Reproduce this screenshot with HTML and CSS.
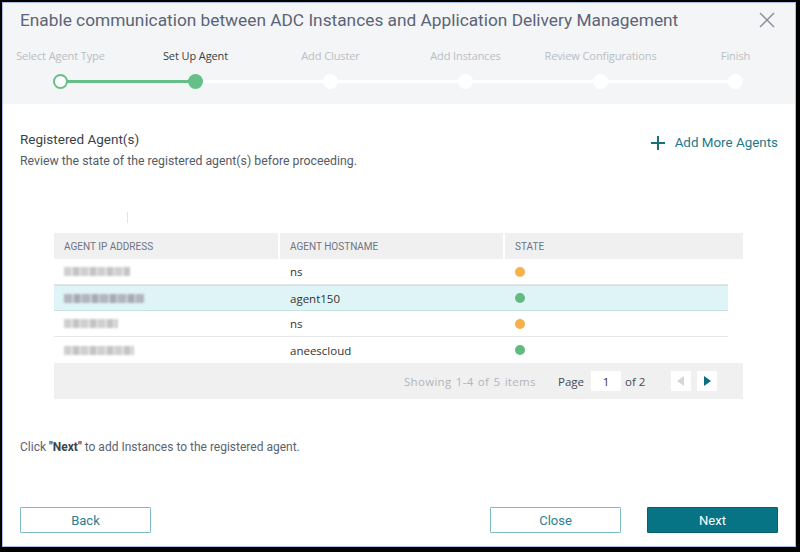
FILE: index.html
```html
<!DOCTYPE html>
<html>
<head>
<meta charset="utf-8">
<link rel="stylesheet" href="styles.css">
</head>
<body>
<div class="frame">
  <header class="head">
    <div class="title-row">
      <h1 class="title">Enable communication between ADC Instances and Application Delivery Management</h1>
      <svg class="close" width="16" height="16" viewBox="0 0 16 16"><path d="M1 1 L15 15 M15 1 L1 15" stroke="#8a9099" stroke-width="1.5" fill="none"/></svg>
    </div>
    <div class="stepper">
      <div class="step done first"><span class="label">Select Agent Type</span><span class="dot"></span></div>
      <div class="step active"><span class="label">Set Up Agent</span><span class="dot"></span></div>
      <div class="step"><span class="label">Add Cluster</span><span class="dot"></span></div>
      <div class="step"><span class="label">Add Instances</span><span class="dot"></span></div>
      <div class="step"><span class="label">Review Configurations</span><span class="dot"></span></div>
      <div class="step"><span class="label">Finish</span><span class="dot"></span></div>
    </div>
  </header>
  <main class="body">
    <div class="section-head">
      <div class="section-title">Registered Agent(s)</div>
      <a class="add-link"><svg width="14" height="14" viewBox="0 0 14 14"><path d="M7 0 V14 M0 7 H14" stroke="#1a6f7d" stroke-width="2"/></svg>Add More Agents</a>
    </div>
    <p class="desc">Review the state of the registered agent(s) before proceeding.</p>
    <div class="tick-wrap"><span class="tick"></span></div>
    <div class="table">
      <div class="thead">
        <div class="th c1">AGENT IP ADDRESS</div>
        <div class="th c2">AGENT HOSTNAME</div>
        <div class="th c3">STATE</div>
      </div>
      <div class="rows">
        <div class="tr">
          <div class="td c1"><span class="blur w66"></span></div>
          <div class="td c2">ns</div>
          <div class="td c3"><span class="state warn"></span></div>
        </div>
        <div class="tr sel">
          <div class="td c1"><span class="blur w80 dark"></span></div>
          <div class="td c2">agent150</div>
          <div class="td c3"><span class="state ok"></span></div>
        </div>
        <div class="tr">
          <div class="td c1"><span class="blur w54"></span></div>
          <div class="td c2">ns</div>
          <div class="td c3"><span class="state warn"></span></div>
        </div>
        <div class="tr last">
          <div class="td c1"><span class="blur w70"></span></div>
          <div class="td c2">aneescloud</div>
          <div class="td c3"><span class="state ok"></span></div>
        </div>
      </div>
      <div class="tfoot">
        <span class="showing">Showing 1-4 of 5 items</span>
        <span class="page">Page</span>
        <span class="page-input">1</span>
        <span class="of">of 2</span>
        <span class="pbtn"><svg width="8" height="10" viewBox="0 0 8 10"><path d="M7 0 L0 5 L7 10 Z" fill="#d3d6da"/></svg></span>
        <span class="pbtn"><svg width="8" height="10" viewBox="0 0 8 10"><path d="M1 0 L8 5 L1 10 Z" fill="#0b6e7e"/></svg></span>
      </div>
    </div>
    <p class="hint">Click <b>"Next"</b> to add Instances to the registered agent.</p>
  </main>
  <footer class="actions">
    <button class="btn outline">Back</button>
    <span class="spacer"></span>
    <button class="btn outline">Close</button>
    <button class="btn primary">Next</button>
  </footer>
</div>
</body>
</html>
```
FILE: styles.css
```css
* { box-sizing: border-box; }
html, body { margin: 0; padding: 0; }
body {
  background: #000;
  width: 800px;
  height: 552px;
  padding: 2px 4px 5px 2px;
  font-family: "Open Sans", "Liberation Sans", sans-serif;
  color: #333;
}
.frame {
  width: 794px;
  height: 545px;
  border: 1px solid #a9c0e6;
  background: #fff;
  display: flex;
  flex-direction: column;
  overflow: hidden;
}
.head {
  background: #f4f5f6;
  height: 101px;
  padding: 6px 0 0 0;
}
.title-row {
  display: flex;
  align-items: center;
  padding: 0 20px 0 17px;
  height: 22px;
}
.title {
  margin: 0;
  flex: 1;
  font-family: "Roboto", "Liberation Sans", sans-serif;
  font-weight: 400;
  font-size: 17.3px;
  color: #5b6478;
  white-space: nowrap;
}
.stepper {
  display: flex;
  margin-left: -10px;
  margin-top: 18px;
}
.step {
  width: 135px;
  flex: none;
  display: flex;
  flex-direction: column;
  align-items: center;
  position: relative;
}
.label {
  font-size: 11px;
  line-height: 14px;
  height: 14px;
  color: #b9bdc4;
  white-space: nowrap;
  font-family: "Open Sans", "Liberation Sans", sans-serif;
  letter-spacing: -0.1px;
}
.step.active .label { color: #3a3d44; }
.dot {
  margin-top: 11px;
  width: 15px;
  height: 15px;
  border-radius: 50%;
  background: #fff;
  position: relative;
  z-index: 2;
}
.step.done .dot { border: 2px solid #66be89; }
.step.active .dot { background: #66be89; }
.step:not(.first)::before {
  content: "";
  position: absolute;
  left: -67px;
  width: 135px;
  top: 31px;
  height: 3px;
  background: #fff;
  z-index: 1;
}
.step.active::before { background: #66be89; }

.body {
  flex: 1;
  padding: 0 17px 0 17px;
}
.section-head {
  display: flex;
  justify-content: space-between;
  align-items: flex-end;
  margin-top: 26px;
}
.section-title {
  font-size: 13.5px;
  line-height: 18px;
  color: #3a3f4a;
  font-family: "Roboto", "Liberation Sans", sans-serif;
}
.add-link {
  display: flex;
  align-items: center;
  gap: 10px;
  font-size: 13.4px;
  color: #1e7887;
  line-height: 18px;
  margin-bottom: -4px;
  font-family: "Roboto", "Liberation Sans", sans-serif;
}
.desc {
  margin: 5px 0 0 0;
  font-size: 12.3px;
  line-height: 16px;
  color: #555b63;
  font-family: "Roboto", "Liberation Sans", sans-serif;
}
.tick-wrap { height: 64px; padding: 43px 0 0 107px; }
.tick { display: block; width: 1px; height: 11px; background: #e2e3e5; }

.table {
  margin-left: 34px;
  width: 689px;
}
.thead {
  display: flex;
  gap: 2px;
  height: 26px;
}
.th {
  background: #f0f0f0;
  font-size: 10px;
  color: #6d7585;
  display: flex;
  align-items: center;
  padding-left: 10px;
  font-family: "Roboto", "Liberation Sans", sans-serif;
}
.th.c1 { width: 224px; }
.th.c2 { width: 223px; }
.th.c3 { width: 238px; }
.rows { width: 674px; }
.tr {
  display: flex;
  height: 26px;
  border-bottom: 1px solid #e4e6e8;
}
.tr.sel { background: #dff4f6; border-top: 1px solid #c7e3e7; border-bottom: 1px solid #c7e3e7; }
.tr.last { border-bottom: none; }
.td {
  display: flex;
  align-items: center;
  padding-left: 10px;
  font-size: 11.5px;
  color: #333;
  font-family: "Open Sans", "Liberation Sans", sans-serif;
}
.td.c1 { width: 226px; }
.td.c2 { width: 225px; }
.td.c3 { flex: 1; }
.blur {
  display: block;
  height: 9px;
  background: repeating-linear-gradient(90deg, #cfcfcf 0 7px, #e6e6e6 7px 9px, #c4c4c4 9px 15px, #e0e0e0 15px 17px);
  filter: blur(1px);
}
.blur.dark { background: repeating-linear-gradient(90deg, #b3b5c0 0 8px, #d0d4da 8px 10px, #a6aab6 10px 16px, #c8ccd2 16px 18px); }
.w66 { width: 66px; }
.w80 { width: 80px; }
.w54 { width: 54px; }
.w70 { width: 70px; }
.state { width: 10px; height: 10px; border-radius: 50%; display: block; }
.state.warn { background: #f8b14a; }
.state.ok { background: #61ba80; }

.tfoot {
  height: 36px;
  background: #f0f0f0;
  display: flex;
  align-items: center;
  padding-left: 350px;
  font-size: 11.5px;
  font-family: "Open Sans", "Liberation Sans", sans-serif;
}
.showing { color: #b1b5bb; width: 154px; letter-spacing: 0.3px; word-spacing: 1px; }
.page { color: #454a52; width: 33px; }
.page-input {
  width: 30px;
  height: 20px;
  background: #fff;
  display: flex;
  align-items: center;
  justify-content: center;
  color: #333;
  margin-right: 4px;
}
.of { color: #454a52; width: 46px; }
.pbtn {
  width: 20px;
  height: 20px;
  background: #fff;
  display: flex;
  align-items: center;
  justify-content: center;
  margin-right: 6px;
}
.hint {
  margin: 41px 0 0 0;
  font-size: 12px;
  color: #5b6270;
  line-height: 14px;
  font-family: "Roboto", "Liberation Sans", sans-serif;
}
.hint b { color: #3d434c; }

.actions {
  display: flex;
  align-items: center;
  padding: 0 17px 13px 17px;
}
.spacer { flex: 1; }
.btn {
  width: 131px;
  height: 26px;
  font-family: "Roboto", "Liberation Sans", sans-serif;
  font-size: 13px;
  border-radius: 1px;
  cursor: pointer;
}
.btn.outline {
  background: #fff;
  border: 1px solid #7dbac6;
  color: #2a7f8e;
}
.btn.primary {
  margin-left: 26px;
  background: #077485;
  border: 1px solid #06606e;
  color: #fff;
}
```
